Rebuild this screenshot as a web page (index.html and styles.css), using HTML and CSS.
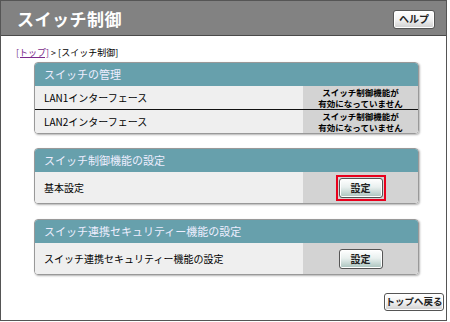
FILE: index.html
```html
<!DOCTYPE html>
<html lang="ja">
<head>
  <meta charset="UTF-8" />
  <title>スイッチ制御</title>
  <link rel="stylesheet" href="styles.css">
</head>
<body>
  <div class="frame">
    <!-- Title bar -->
    <div class="title-bar">
      <h1>スイッチ制御</h1>
      <button class="btn help-btn">ヘルプ</button>
    </div>

    <div class="breadcrumb"><a href="#">[トップ]</a> &gt; [スイッチ制御]</div>

    <div class="panel panel-first">
      <div class="panel-head">スイッチの管理</div>
      <div class="row row-split">
        <div class="row-label">LAN1インターフェース</div>
        <div class="row-value status">スイッチ制御機能が<br>有効になっていません</div>
      </div>
      <div class="row">
        <div class="row-label">LAN2インターフェース</div>
        <div class="row-value status">スイッチ制御機能が<br>有効になっていません</div>
      </div>
    </div>

    <div class="panel panel-second">
      <div class="panel-head">スイッチ制御機能の設定</div>
      <div class="row row-tall">
        <div class="row-label">基本設定</div>
        <div class="row-value">
          <span class="highlight"><button class="btn set-btn">設定</button></span>
        </div>
      </div>
    </div>

    <div class="panel panel-third">
      <div class="panel-head">スイッチ連携セキュリティー機能の設定</div>
      <div class="row row-tall">
        <div class="row-label">スイッチ連携セキュリティー機能の設定</div>
        <div class="row-value">
          <button class="btn set-btn">設定</button>
        </div>
      </div>
    </div>

    <div class="footer">
      <button class="btn back-btn">トップへ戻る</button>
    </div>
  </div>
</body>
</html>
```

FILE: styles.css
```css
body {
  margin: 0;
  padding: 0;
  font-family: "Noto Sans CJK JP", "Liberation Sans", sans-serif;
  background: #fff;
  color: #000;
}

.frame {
  width: 445px;
  height: 319px;
  border: 1px solid #555;
  background: #fff;
  position: relative;
}

.title-bar {
  height: 34px;
  background: #828282;
  border-bottom: 1px solid #4a4a4a;
  display: flex;
  align-items: center;
  justify-content: space-between;
  padding: 0 11px 0 16px;
}

.title-bar h1 {
  margin: 0;
  font-size: 17px;
  font-weight: bold;
  color: #fff;
  letter-spacing: 0.5px;
}

.btn {
  font-family: "Noto Sans CJK JP", sans-serif;
  font-size: 10px;
  font-weight: bold;
  color: #222;
  border: 1px solid #555;
  border-radius: 3px;
  padding: 0;
  cursor: pointer;
  line-height: 1;
  white-space: nowrap;
}

.help-btn {
  width: 42px;
  height: 19px;
  margin-top: 2px;
  background: linear-gradient(#ffffff, #f2f2f2 50%, #cfcfcf);
  box-shadow: inset 0 0 0 1px #fff;
}

.breadcrumb {
  font-size: 9px;
  margin: 11px 0 0 15px;
  height: 12px;
  line-height: 12px;
}

.breadcrumb a {
  color: #7b2a8a;
}

.panel {
  width: 383px;
  margin-left: 33px;
  border: 1px solid #999;
  border-radius: 4px;
  overflow: hidden;
  box-shadow: 1px 1px 2px rgba(0, 0, 0, 0.3);
}

.panel-first {
  margin-top: 3px;
}

.panel-second {
  margin-top: 14px;
}

.panel-third {
  margin-top: 15px;
}

.panel-head {
  height: 23px;
  line-height: 23px;
  background: #67a0ac;
  color: #eef;
  font-size: 11px;
  padding-left: 9px;
}

.row {
  display: flex;
  height: 23px;
  background: #efefef;
}

.row-split {
  border-bottom: 1px solid #111;
}

.row-tall {
  height: 31px;
}

.row-label {
  flex: 1;
  font-size: 10px;
  padding-left: 9px;
  display: flex;
  align-items: center;
}

.row-value {
  width: 115px;
  background: #d3d3d3;
  display: flex;
  align-items: center;
  justify-content: center;
}

.status {
  flex-direction: column;
  font-size: 8.5px;
  font-weight: bold;
  line-height: 11px;
  text-align: center;
}

.set-btn {
  width: 44px;
  height: 20px;
  background: linear-gradient(#ffffff, #e9f0ef 45%, #a9c3bd);
  box-shadow: inset 0 0 0 1px #fff;
}

.highlight {
  display: inline-flex;
  border: 2px solid #e8001c;
  padding: 1px;
}

.footer {
  display: flex;
  justify-content: flex-end;
  padding: 18px 2px 0 0;
}

.back-btn {
  width: 60px;
  height: 18px;
  font-size: 9.5px;
  background: linear-gradient(#ffffff, #f2f2f2 50%, #cfcfcf);
  box-shadow: inset 0 0 0 1px #fff;
}
```
